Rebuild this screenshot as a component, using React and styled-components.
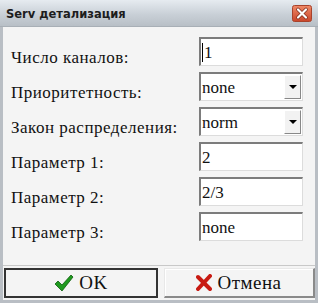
import React from 'react';
import styled, { createGlobalStyle } from 'styled-components';

const Global = createGlobalStyle`
  html, body {
    margin: 0;
    padding: 0;
    background: #f3f3f3;
  }
`;

const serif = `"Liberation Serif", "DejaVu Serif", "Times New Roman", Times, serif`;

const Window = styled.div`
  width: 318px;
  height: 303px;
  box-sizing: border-box;
  display: flex;
  flex-direction: column;
  background: #f4f4f4;
  border-left: 3px solid #b9bec4;
  border-right: 3px solid #b9bec4;
  border-bottom: 3px solid #b9bec4;
  font-family: ${serif};
  color: #111;
`;

const TitleBar = styled.div`
  height: 27px;
  box-sizing: border-box;
  margin: 0 -3px;
  display: flex;
  align-items: center;
  justify-content: space-between;
  padding: 1px 6px 0 6px;
  background: linear-gradient(#e6ebf0, #c9d0d7 55%, #b8bfc6);
  border-bottom: 1px solid #a8afb6;
`;

const Title = styled.span`
  font-family: "DejaVu Sans", Verdana, sans-serif;
  font-weight: bold;
  font-size: 11.5px;
  color: #1d1d1d;
`;

const Form = styled.div`
  flex: 1;
  display: grid;
  grid-template-columns: 1fr 104px;
  grid-auto-rows: 29px;
  row-gap: 6px;
  padding: 10px 12px 0 8px;
`;

const Label = styled.div`
  font-family: ${serif};
  font-size: 17px;
  letter-spacing: 0.5px;
  line-height: 18px;
  padding-top: 12px;
  white-space: nowrap;
`;

const Field = styled.div`
  box-sizing: border-box;
  height: 29px;
  display: flex;
  align-items: center;
  background: #fff;
  border-top: 2px solid #7c7c7c;
  border-left: 2px solid #7c7c7c;
  border-right: 1px solid #dcdcdc;
  border-bottom: 1px solid #dcdcdc;
  padding-left: 1px;
  font-family: ${serif};
  font-size: 17px;
`;

const Caret = styled.span`
  width: 1px;
  height: 19px;
  background: #000;
  margin-right: 1px;
`;

const Value = styled.span`
  flex: 1;
  line-height: 18px;
  padding-top: 2px;
`;

const DropButton = styled.span`
  box-sizing: border-box;
  width: 17px;
  height: 24px;
  margin-right: 1px;
  display: flex;
  align-items: center;
  justify-content: center;
  background: #f2f2f2;
  border-top: 1px solid #fff;
  border-left: 1px solid #fff;
  border-right: 1px solid #888;
  border-bottom: 1px solid #888;
  &::after {
    content: '';
    border-left: 4px solid transparent;
    border-right: 4px solid transparent;
    border-top: 4px solid #000;
  }
`;

const Footer = styled.div`
  border-top: 1px solid #c8c8c8;
  padding: 2px 0 2px 1px;
  display: flex;
  gap: 6px;
`;

const Button = styled.div`
  box-sizing: border-box;
  height: 30px;
  flex: ${p => (p.$wide ? '0 0 151px' : '0 0 154px')};
  display: flex;
  align-items: center;
  justify-content: center;
  gap: 5px;
  font-family: ${serif};
  font-size: 19px;
  letter-spacing: 0.5px;
  background: #f4f4f4;
  border: ${p => (p.$default ? '2px solid #333' : '1px solid #e8e8e8')};
  border-right: ${p => (p.$default ? '2px solid #333' : '2px solid #8a8a8a')};
  border-bottom: ${p => (p.$default ? '2px solid #333' : '2px solid #8a8a8a')};
  box-shadow: ${p => (p.$default ? 'none' : 'inset 1px 1px 0 #fff')};
`;

const fields = [
  { label: 'Число каналов:', value: '1', caret: true },
  { label: 'Приоритетность:', value: 'none', select: true },
  { label: 'Закон распределения:', value: 'norm', select: true },
  { label: 'Параметр 1:', value: '2' },
  { label: 'Параметр 2:', value: '2/3' },
  { label: 'Параметр 3:', value: 'none' },
];

function CloseIcon() {
  return (
    <svg width="20" height="17" viewBox="0 0 20 17">
      <defs>
        <linearGradient id="cg" x1="0" y1="0" x2="0" y2="1">
          <stop offset="0" stopColor="#f08a68" />
          <stop offset="1" stopColor="#c9452a" />
        </linearGradient>
      </defs>
      <rect x="0.5" y="0.5" width="19" height="16" rx="2" fill="url(#cg)" stroke="#a8432c" />
      <path d="M6 4.5 L14 12.5 M14 4.5 L6 12.5" stroke="#7a2a1a" strokeWidth="3.6" strokeLinecap="round" />
      <path d="M6 4.5 L14 12.5 M14 4.5 L6 12.5" stroke="#fff" strokeWidth="2.2" strokeLinecap="round" />
    </svg>
  );
}

function CheckIcon() {
  return (
    <svg width="20" height="18" viewBox="0 0 20 18">
      <path d="M1 10 L4 7 L8 11 L17 1 L19 3 L8 17 Z" fill="#1f9a1f" stroke="#0b5d0b" strokeWidth="0.8" strokeLinejoin="round" />
    </svg>
  );
}

function CrossIcon() {
  return (
    <svg width="16" height="17" viewBox="0 0 16 17">
      <path d="M2 3 L14 15 M14 2 L2 15" stroke="#c81a12" strokeWidth="4" strokeLinecap="round" />
    </svg>
  );
}

export default function App() {
  return (
    <Window>
      <Global />
      <TitleBar>
        <Title>Serv детализация</Title>
        <CloseIcon />
      </TitleBar>
      <Form>
        {fields.map(f => (
          <React.Fragment key={f.label}>
            <Label>{f.label}</Label>
            <Field>
              {f.caret && <Caret />}
              <Value>{f.value}</Value>
              {f.select && <DropButton />}
            </Field>
          </React.Fragment>
        ))}
      </Form>
      <Footer>
        <Button $default>
          <CheckIcon />
          OK
        </Button>
        <Button $wide>
          <CrossIcon />
          Отмена
        </Button>
      </Footer>
    </Window>
  );
}
